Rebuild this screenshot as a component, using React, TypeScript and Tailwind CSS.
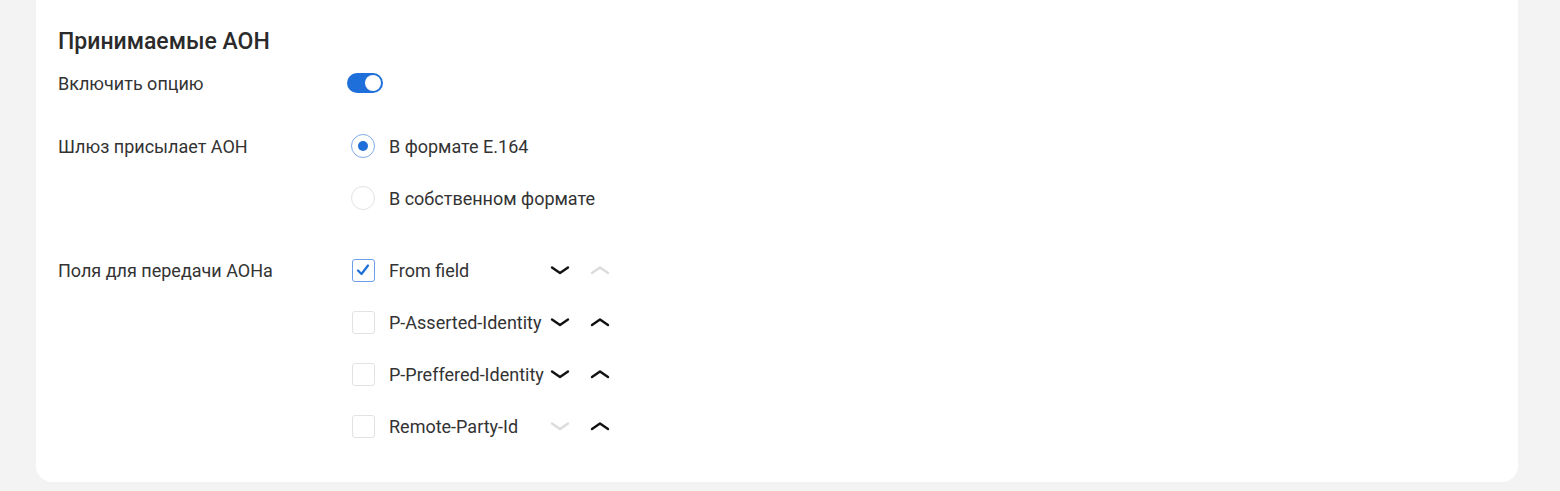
import { FC, useState } from 'react';

const blue = '#1e6fd9';

const Chevron: FC<{ dir: 'up' | 'down'; disabled?: boolean }> = ({ dir, disabled }) => (
  <button type="button" className="flex h-[52px] w-10 items-center justify-center" disabled={disabled}>
    <svg width="24" height="24" viewBox="0 0 24 24" fill="none">
      <path
        d={dir === 'down' ? 'M4 9.5L12 15L20 9.5' : 'M4 15L12 9.5L20 15'}
        stroke={disabled ? '#dcdcdc' : '#111111'}
        strokeWidth="2.4"
        strokeLinecap="round"
        strokeLinejoin="round"
      />
    </svg>
  </button>
);

const Radio: FC<{ checked?: boolean; label: string }> = ({ checked, label }) => (
  <div className="flex h-[52px] items-center">
    <div className="flex w-8 justify-center">
      {checked ? (
        <div className="flex h-6 w-6 items-center justify-center rounded-full border border-[#7fabea]">
          <div className="h-[10px] w-[10px] rounded-full bg-[#1e6fd9]" />
        </div>
      ) : (
        <div className="h-6 w-6 rounded-full border border-[#e2e2e2]" />
      )}
    </div>
    <span className="ml-[10px] text-[18px] text-[#333333]">{label}</span>
  </div>
);

const Checkbox: FC<{ checked?: boolean; label: string; up?: boolean; down?: boolean }> = ({
  checked,
  label,
  up = true,
  down = true,
}) => (
  <div className="flex h-[52px] items-center">
    <div className="flex w-8 justify-center">
      {checked ? (
        <div className="flex h-[23px] w-[23px] items-center justify-center rounded-[3px] border border-[#6b9fe8]">
          <svg width="16" height="16" viewBox="0 0 16 16" fill="none">
            <path d="M3 8.5L6.5 12L13 3.5" stroke={blue} strokeWidth="2.2" strokeLinecap="round" strokeLinejoin="round" />
          </svg>
        </div>
      ) : (
        <div className="h-[23px] w-[23px] rounded-[3px] border border-[#e2e2e2]" />
      )}
    </div>
    <span className="ml-[10px] w-[151px] whitespace-nowrap text-[18px] text-[#333333]">{label}</span>
    <Chevron dir="down" disabled={!down} />
    <Chevron dir="up" disabled={!up} />
  </div>
);

const App: FC = () => {
  const [enabled, setEnabled] = useState(true);

  return (
    <div className="min-h-screen bg-[#f2f3f2] pb-[9px] pl-[36px] pr-[42px] font-['Roboto',sans-serif]">
      <div className="rounded-b-2xl bg-white pb-[30px] pl-[22px] pt-[30px]">
        <h2 className="text-[23px] font-medium leading-6 text-[#2b2b2b]">Принимаемые АОН</h2>

        <div className="mt-[3px] flex h-[52px] items-center">
          <span className="w-[289px] text-[18px] text-[#333333]">Включить опцию</span>
          <button
            type="button"
            onClick={() => setEnabled(!enabled)}
            className="flex h-5 w-9 items-center justify-end rounded-full bg-[#1e6fd9] px-[2px]"
          >
            <span className="h-4 w-4 rounded-full bg-white" />
          </button>
        </div>

        <div className="mt-[11px] flex">
          <div className="flex h-[52px] w-[289px] items-center text-[18px] text-[#333333]">Шлюз присылает АОН</div>
          <div className="flex flex-col">
            <Radio checked label="В формате E.164" />
            <Radio label="В собственном формате" />
          </div>
        </div>

        <div className="mt-[20px] flex">
          <div className="flex h-[52px] w-[289px] items-center text-[18px] text-[#333333]">Поля для передачи АОНа</div>
          <div className="flex flex-col">
            <Checkbox checked label="From field" up={false} />
            <Checkbox label="P-Asserted-Identity" />
            <Checkbox label="P-Preffered-Identity" />
            <Checkbox label="Remote-Party-Id" down={false} />
          </div>
        </div>
      </div>
    </div>
  );
};

export default App;
